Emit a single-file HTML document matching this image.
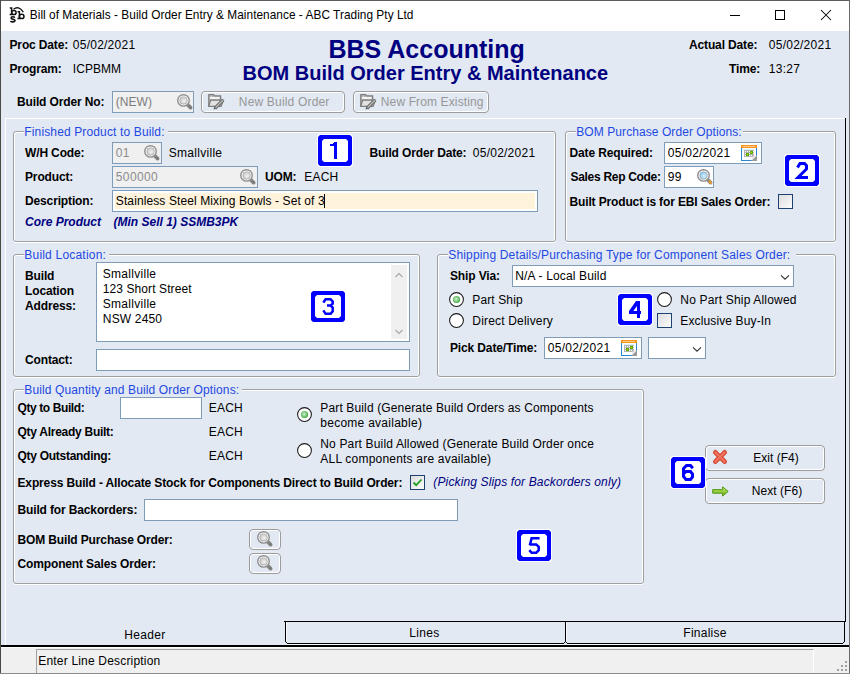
<!DOCTYPE html>
<html><head><meta charset="utf-8"><style>
html,body{margin:0;padding:0;}
body{width:850px;height:674px;position:relative;overflow:hidden;background:#e2e9f3;font-family:"Liberation Sans",sans-serif;}
.a{position:absolute;}
.t{position:absolute;white-space:pre;font-family:"Liberation Sans",sans-serif;}
.grp{border:1px solid #a0a0a0;border-radius:3px;box-shadow:inset 1px 1px 0 #fff, inset -1px 0 0 #fff, 0 1px 0 #fff;}
</style></head><body>

<div class="a" style="left:0px;top:0px;width:850px;height:674px;background:#e2e9f3;"></div>
<div class="a" style="left:0px;top:0px;width:850px;height:31px;background:#fff;"></div>
<div class="a" style="left:0px;top:0px;width:850px;height:1px;background:#5c5c5c;"></div>
<div class="a" style="left:0px;top:0px;width:1px;height:674px;background:#4a4a44;"></div>
<div class="a" style="left:849px;top:0px;width:1px;height:674px;background:#6a6a6a;"></div>
<svg class="a" style="left:0px;top:0px" width="30" height="30" viewBox="0 0 30 30">
<g fill="none" stroke="#111" stroke-width="1.5">
<path d="M9.8 8 H11.6 V14.6 H9.6"/><ellipse cx="13.9" cy="12.5" rx="2.2" ry="2.1"/>
<path d="M17.6 11.8 H19.4 V18.6 H17.4"/><ellipse cx="21.7" cy="16.4" rx="2.3" ry="2.2"/>
<path d="M14.9 17.6 Q13.6 16.4 11.9 16.9 Q10.6 17.6 11.6 18.7 L13.8 19.4 Q15.4 20.1 14.8 21.2 Q13.6 22.3 11.4 21.7 L10.4 21.1" stroke-width="1.6"/>
<path d="M13.6 9.2 Q18.4 5.2 23.4 12.2" stroke-width="1.3"/>
</g></svg>
<div class="t" style="left:29.80px;top:8.49px;font-size:11.85px;line-height:14px;font-weight:normal;color:#000;font-style:normal;letter-spacing:0.035px;">Bill of Materials - Build Order Entry &amp; Maintenance - ABC Trading Pty Ltd</div>
<div class="a" style="left:730px;top:15px;width:10px;height:1px;background:#000;"></div>
<div class="a" style="left:775px;top:10px;width:10px;height:10px;border:1px solid #000;box-sizing:border-box;"></div>
<svg class="a" style="left:820px;top:9px" width="12" height="12" viewBox="0 0 12 12"><path d="M1 1 L11 11 M11 1 L1 11" stroke="#000" stroke-width="1.05"/></svg>
<div class="t" style="left:9.50px;top:38.34px;font-size:12px;line-height:14px;font-weight:bold;color:#000;font-style:normal;letter-spacing:-0.14px;">Proc Date:</div>
<div class="t" style="left:72.80px;top:38.34px;font-size:12px;line-height:14px;font-weight:normal;color:#000;font-style:normal;letter-spacing:0.244px;">05/02/2021</div>
<div class="t" style="left:9.50px;top:62.34px;font-size:12px;line-height:14px;font-weight:bold;color:#000;font-style:normal;letter-spacing:-0.14px;">Program:</div>
<div class="t" style="left:72.80px;top:62.34px;font-size:12px;line-height:14px;font-weight:normal;color:#000;font-style:normal;letter-spacing:0.05px;">ICPBMM</div>
<div class="t" style="left:328.50px;top:34.14px;font-size:25px;line-height:30px;font-weight:bold;color:#000080;font-style:normal;">BBS Accounting</div>
<div class="t" style="left:242.50px;top:60.57px;font-size:20px;line-height:24px;font-weight:bold;color:#000080;font-style:normal;">BOM Build Order Entry &amp; Maintenance</div>
<div class="t" style="left:689.00px;top:38.34px;font-size:12px;line-height:14px;font-weight:bold;color:#000;font-style:normal;letter-spacing:-0.14px;">Actual Date:</div>
<div class="t" style="left:768.80px;top:38.34px;font-size:12px;line-height:14px;font-weight:normal;color:#000;font-style:normal;letter-spacing:0.244px;">05/02/2021</div>
<div class="t" style="left:729.00px;top:62.34px;font-size:12px;line-height:14px;font-weight:bold;color:#000;font-style:normal;letter-spacing:-0.14px;">Time:</div>
<div class="t" style="left:768.80px;top:62.34px;font-size:12px;line-height:14px;font-weight:normal;color:#000;font-style:normal;letter-spacing:0.244px;">13:27</div>
<div class="t" style="left:17.00px;top:95.34px;font-size:12px;line-height:14px;font-weight:bold;color:#000;font-style:normal;letter-spacing:-0.14px;">Build Order No:</div>
<div class="a" style="left:112px;top:91px;width:82px;height:22px;background:#f0f0f0;border:1px solid #7f9db9;box-sizing:border-box;"></div>
<div class="t" style="left:115.80px;top:95.14px;font-size:12px;line-height:14px;font-weight:normal;color:#7c7c7c;font-style:normal;letter-spacing:0.052px;">(NEW)</div>
<svg class="a" style="left:177px;top:94px" width="17" height="17" viewBox="0 0 17 17">
<defs><radialGradient id="lg177_94" cx="0.6" cy="0.6" r="0.8"><stop offset="0" stop-color="#f2f2f2"/><stop offset="1" stop-color="#bdbdbd"/></radialGradient></defs>
<path d="M10.8 10.8 L13.6 13.6" stroke="#8c8c8c" stroke-width="3.8" stroke-linecap="round"/>
<path d="M12.6 12.6 L13.8 13.8" stroke="#7c7c7c" stroke-width="2.4" stroke-linecap="round"/>
<circle cx="6.5" cy="6.4" r="6.4" fill="#8e8e8e"/>
<circle cx="6.5" cy="6.4" r="5" fill="#fcfcfc"/>
<circle cx="6.5" cy="6.4" r="4" fill="#a4a4a4"/>
<circle cx="6.5" cy="6.4" r="3.3" fill="url(#lg177_94)"/>
</svg>
<div class="a" style="left:201px;top:91px;width:144px;height:22px;border:1px solid #9c9c9c;border-radius:4px;box-sizing:border-box;box-shadow:inset 1px 1px 0 #fff, inset -1px -1px 0 #fff;background:#e2e9f3;"></div>
<div class="a" style="left:353px;top:91px;width:136px;height:22px;border:1px solid #9c9c9c;border-radius:4px;box-sizing:border-box;box-shadow:inset 1px 1px 0 #fff, inset -1px -1px 0 #fff;background:#e2e9f3;"></div>
<svg class="a" style="left:208px;top:93px" width="17" height="17" viewBox="0 0 17 17">
<path d="M0.8 1.6 H5.6 L6.6 2.8 H12.6 V13.4 H0.8 Z" fill="#bdbdbd" stroke="#7c7c7c" stroke-width="1.2"/>
<rect x="2" y="4" width="9.5" height="2" fill="#f4f4f4"/>
<path d="M0.8 13.4 L2.6 7.2 H15.4 L13 13.4 Z" fill="#e2e2e2" stroke="#7c7c7c" stroke-width="1.2"/>
<path d="M7 15.2 L15.2 7" stroke="#6e6e6e" stroke-width="3.4"/>
<path d="M7.6 14.6 L15 7.2" stroke="#c4c4c4" stroke-width="1.2"/>
<path d="M5.6 16.6 L6.2 14 L8 15.8 Z" fill="#555"/>
</svg>
<svg class="a" style="left:360px;top:93px" width="17" height="17" viewBox="0 0 17 17">
<path d="M0.8 1.6 H5.6 L6.6 2.8 H12.6 V13.4 H0.8 Z" fill="#bdbdbd" stroke="#7c7c7c" stroke-width="1.2"/>
<rect x="2" y="4" width="9.5" height="2" fill="#f4f4f4"/>
<path d="M0.8 13.4 L2.6 7.2 H15.4 L13 13.4 Z" fill="#e2e2e2" stroke="#7c7c7c" stroke-width="1.2"/>
<path d="M7 15.2 L15.2 7" stroke="#6e6e6e" stroke-width="3.4"/>
<path d="M7.6 14.6 L15 7.2" stroke="#c4c4c4" stroke-width="1.2"/>
<path d="M5.6 16.6 L6.2 14 L8 15.8 Z" fill="#555"/>
</svg>
<div class="t" style="left:238.80px;top:95.34px;font-size:12px;line-height:14px;font-weight:normal;color:#979797;font-style:normal;letter-spacing:0.181px;">New Build Order</div>
<div class="t" style="left:380.80px;top:95.34px;font-size:12px;line-height:14px;font-weight:normal;color:#979797;font-style:normal;letter-spacing:0.127px;">New From Existing</div>
<div class="a" style="left:5px;top:118px;width:841px;height:1px;background:#fff;"></div>
<div class="a" style="left:5px;top:118px;width:1px;height:527px;background:#fff;"></div>
<div class="a" style="left:845px;top:118px;width:1px;height:504px;background:#000;"></div>
<div class="a grp" style="left:13px;top:131px;width:541px;height:109px;"></div>
<div class="a" style="left:24px;top:129px;width:144px;height:5px;background:#e2e9f3;"></div>
<div class="t" style="left:24.30px;top:125.34px;font-size:12px;line-height:14px;font-weight:normal;color:#1e48e2;font-style:normal;letter-spacing:0.137px;">Finished Product to Build:</div>
<div class="t" style="left:25.00px;top:145.84px;font-size:12px;line-height:14px;font-weight:bold;color:#000;font-style:normal;letter-spacing:-0.14px;">W/H Code:</div>
<div class="a" style="left:112px;top:142px;width:50px;height:22px;background:#f0f0f0;border:1px solid #7f9db9;box-sizing:border-box;"></div>
<div class="t" style="left:115.80px;top:145.84px;font-size:12px;line-height:14px;font-weight:normal;color:#8c8c8c;font-style:normal;letter-spacing:0.376px;">01</div>
<svg class="a" style="left:144px;top:145px" width="17" height="17" viewBox="0 0 17 17">
<defs><radialGradient id="lg144_145" cx="0.6" cy="0.6" r="0.8"><stop offset="0" stop-color="#f2f2f2"/><stop offset="1" stop-color="#bdbdbd"/></radialGradient></defs>
<path d="M10.8 10.8 L13.6 13.6" stroke="#8c8c8c" stroke-width="3.8" stroke-linecap="round"/>
<path d="M12.6 12.6 L13.8 13.8" stroke="#7c7c7c" stroke-width="2.4" stroke-linecap="round"/>
<circle cx="6.5" cy="6.4" r="6.4" fill="#8e8e8e"/>
<circle cx="6.5" cy="6.4" r="5" fill="#fcfcfc"/>
<circle cx="6.5" cy="6.4" r="4" fill="#a4a4a4"/>
<circle cx="6.5" cy="6.4" r="3.3" fill="url(#lg144_145)"/>
</svg>
<div class="t" style="left:168.80px;top:145.84px;font-size:12px;line-height:14px;font-weight:normal;color:#000;font-style:normal;letter-spacing:0.282px;">Smallville</div>
<div class="t" style="left:25.00px;top:169.84px;font-size:12px;line-height:14px;font-weight:bold;color:#000;font-style:normal;letter-spacing:-0.14px;">Product:</div>
<div class="a" style="left:112px;top:166px;width:146px;height:22px;background:#f0f0f0;border:1px solid #7f9db9;box-sizing:border-box;"></div>
<div class="t" style="left:115.80px;top:169.84px;font-size:12px;line-height:14px;font-weight:normal;color:#8c8c8c;font-style:normal;letter-spacing:0.376px;">500000</div>
<svg class="a" style="left:240px;top:169px" width="17" height="17" viewBox="0 0 17 17">
<defs><radialGradient id="lg240_169" cx="0.6" cy="0.6" r="0.8"><stop offset="0" stop-color="#f2f2f2"/><stop offset="1" stop-color="#bdbdbd"/></radialGradient></defs>
<path d="M10.8 10.8 L13.6 13.6" stroke="#8c8c8c" stroke-width="3.8" stroke-linecap="round"/>
<path d="M12.6 12.6 L13.8 13.8" stroke="#7c7c7c" stroke-width="2.4" stroke-linecap="round"/>
<circle cx="6.5" cy="6.4" r="6.4" fill="#8e8e8e"/>
<circle cx="6.5" cy="6.4" r="5" fill="#fcfcfc"/>
<circle cx="6.5" cy="6.4" r="4" fill="#a4a4a4"/>
<circle cx="6.5" cy="6.4" r="3.3" fill="url(#lg240_169)"/>
</svg>
<div class="t" style="left:265.00px;top:169.84px;font-size:12px;line-height:14px;font-weight:bold;color:#000;font-style:normal;letter-spacing:-0.14px;">UOM:</div>
<div class="t" style="left:304.30px;top:169.84px;font-size:12px;line-height:14px;font-weight:normal;color:#000;font-style:normal;letter-spacing:0.215px;">EACH</div>
<div class="t" style="left:25.00px;top:193.84px;font-size:12px;line-height:14px;font-weight:bold;color:#000;font-style:normal;letter-spacing:-0.14px;">Description:</div>
<div class="a" style="left:112px;top:190px;width:426px;height:22px;background:#fff;border:1px solid #7f9db9;box-sizing:border-box;"></div>
<div class="a" style="left:115px;top:193px;width:420px;height:16px;background:#fff3dc;"></div>
<div class="t" style="left:115.80px;top:193.84px;font-size:12px;line-height:14px;font-weight:normal;color:#000;font-style:normal;letter-spacing:0.108px;">Stainless Steel Mixing Bowls - Set of 3</div>
<div class="a" style="left:324px;top:194px;width:1px;height:14px;background:#000;"></div>
<div class="t" style="left:25.00px;top:215.14px;font-size:12px;line-height:14px;font-weight:bold;color:#000080;font-style:italic;">Core Product</div>
<div class="t" style="left:113.50px;top:215.14px;font-size:12px;line-height:14px;font-weight:bold;color:#000080;font-style:italic;">(Min Sell 1) SSMB3PK</div>
<div class="t" style="left:369.50px;top:145.84px;font-size:12px;line-height:14px;font-weight:bold;color:#000;font-style:normal;letter-spacing:-0.14px;">Build Order Date:</div>
<div class="t" style="left:472.80px;top:145.84px;font-size:12px;line-height:14px;font-weight:normal;color:#000;font-style:normal;letter-spacing:0.244px;">05/02/2021</div>
<div class="a grp" style="left:565px;top:131px;width:269px;height:109px;"></div>
<div class="a" style="left:576px;top:129px;width:167px;height:5px;background:#e2e9f3;"></div>
<div class="t" style="left:576.30px;top:125.34px;font-size:12px;line-height:14px;font-weight:normal;color:#1e48e2;font-style:normal;letter-spacing:0.072px;">BOM Purchase Order Options:</div>
<div class="t" style="left:569.50px;top:146.34px;font-size:12px;line-height:14px;font-weight:bold;color:#000;font-style:normal;letter-spacing:-0.14px;">Date Required:</div>
<div class="a" style="left:664px;top:142px;width:98px;height:22px;background:#fff;border:1px solid #7f9db9;box-sizing:border-box;"></div>
<div class="t" style="left:667.80px;top:146.34px;font-size:12px;line-height:14px;font-weight:normal;color:#000;font-style:normal;letter-spacing:0.244px;">05/02/2021</div>
<svg class="a" style="left:741px;top:145px" width="16" height="16" viewBox="0 0 16 16" shape-rendering="crispEdges">
<rect x="0" y="0" width="16" height="16" fill="#2a86cf"/>
<rect x="1" y="3" width="14" height="12" fill="#fff"/>
<rect x="0" y="0" width="16" height="3" fill="#f7941d"/>
<rect x="2" y="1" width="12" height="1" fill="#fbc98a"/>
<rect x="3" y="4" width="10" height="1" fill="#d6f4fb"/>
<g fill="#b4b4b4"><rect x="3" y="5" width="10" height="7"/></g>
<g fill="#fff"><rect x="4" y="6" width="1" height="1"/><rect x="6" y="6" width="1" height="1"/><rect x="8" y="6" width="1" height="1"/><rect x="10" y="6" width="1" height="1"/><rect x="12" y="6" width="1" height="1"/>
<rect x="4" y="8" width="1" height="1"/><rect x="6" y="8" width="1" height="1"/><rect x="8" y="8" width="1" height="1"/><rect x="10" y="8" width="1" height="1"/><rect x="12" y="8" width="1" height="1"/>
<rect x="4" y="10" width="1" height="1"/><rect x="6" y="10" width="1" height="1"/><rect x="8" y="10" width="1" height="1"/><rect x="10" y="10" width="1" height="1"/></g>
<rect x="5" y="8" width="3" height="3" fill="#5aa800"/><rect x="9" y="6" width="3" height="3" fill="#5aa800"/>
<rect x="6" y="9" width="1" height="1" fill="#b8e000"/><rect x="10" y="7" width="1" height="1" fill="#b8e000"/>
<path d="M10 16 L16 10 L16 16 Z" fill="#9a9a9a" shape-rendering="auto"/>
<path d="M10.5 15.5 L15.5 10.5 L11.5 11.5 Z" fill="#e8e8e8" shape-rendering="auto"/>
</svg>
<div class="t" style="left:570.50px;top:170.34px;font-size:12px;line-height:14px;font-weight:bold;color:#000;font-style:normal;letter-spacing:-0.3px;">Sales Rep Code:</div>
<div class="a" style="left:664px;top:166px;width:50px;height:22px;background:#fff;border:1px solid #7f9db9;box-sizing:border-box;"></div>
<div class="t" style="left:667.80px;top:170.34px;font-size:12px;line-height:14px;font-weight:normal;color:#000;font-style:normal;letter-spacing:0.376px;">99</div>
<svg class="a" style="left:697px;top:169px" width="17" height="17" viewBox="0 0 17 17">
<defs><radialGradient id="lg697_169" cx="0.6" cy="0.6" r="0.8"><stop offset="0" stop-color="#e2f3fd"/><stop offset="1" stop-color="#6bb6ea"/></radialGradient></defs>
<path d="M10.8 10.8 L13.6 13.6" stroke="#8c8c8c" stroke-width="3.8" stroke-linecap="round"/>
<path d="M12.6 12.6 L13.8 13.8" stroke="#e89a2c" stroke-width="2.4" stroke-linecap="round"/>
<circle cx="6.5" cy="6.4" r="6.4" fill="#8e8e8e"/>
<circle cx="6.5" cy="6.4" r="5" fill="#fcfcfc"/>
<circle cx="6.5" cy="6.4" r="4" fill="#a4a4a4"/>
<circle cx="6.5" cy="6.4" r="3.3" fill="url(#lg697_169)"/>
</svg>
<div class="t" style="left:569.50px;top:195.34px;font-size:12px;line-height:14px;font-weight:bold;color:#000;font-style:normal;letter-spacing:-0.14px;">Built Product is for EBI Sales Order:</div>
<svg class="a" style="left:778px;top:194px" width="15" height="15" viewBox="0 0 15 15">
<defs><linearGradient id="cg778_194" x1="0" y1="0" x2="1" y2="1"><stop offset="0" stop-color="#dcdcdc"/><stop offset="1" stop-color="#fdfdfd"/></linearGradient></defs>
<rect x="0.5" y="0.5" width="14" height="14" fill="url(#cg778_194)" stroke="#1d4272"/>

</svg>
<div class="a grp" style="left:13px;top:254px;width:405px;height:121px;"></div>
<div class="a" style="left:24px;top:252px;width:85px;height:5px;background:#e2e9f3;"></div>
<div class="t" style="left:24.30px;top:248.34px;font-size:12px;line-height:14px;font-weight:normal;color:#1e48e2;font-style:normal;letter-spacing:0.202px;">Build Location:</div>
<div class="t" style="left:25.00px;top:269.34px;font-size:12px;line-height:14px;font-weight:bold;color:#000;font-style:normal;letter-spacing:-0.14px;">Build</div>
<div class="t" style="left:25.00px;top:284.34px;font-size:12px;line-height:14px;font-weight:bold;color:#000;font-style:normal;letter-spacing:-0.14px;">Location</div>
<div class="t" style="left:25.00px;top:299.34px;font-size:12px;line-height:14px;font-weight:bold;color:#000;font-style:normal;letter-spacing:-0.14px;">Address:</div>
<div class="a" style="left:96px;top:262px;width:314px;height:80px;background:#fff;border:1px solid #7f9db9;box-sizing:border-box;"></div>
<div class="t" style="left:102.80px;top:266.84px;font-size:12px;line-height:14px;font-weight:normal;color:#000;font-style:normal;letter-spacing:0.282px;">Smallville</div>
<div class="t" style="left:102.80px;top:281.84px;font-size:12px;line-height:14px;font-weight:normal;color:#000;font-style:normal;letter-spacing:0.088px;">123 Short Street</div>
<div class="t" style="left:102.80px;top:296.84px;font-size:12px;line-height:14px;font-weight:normal;color:#000;font-style:normal;letter-spacing:0.282px;">Smallville</div>
<div class="t" style="left:102.80px;top:311.84px;font-size:12px;line-height:14px;font-weight:normal;color:#000;font-style:normal;letter-spacing:0.172px;">NSW 2450</div>
<div class="a" style="left:391px;top:265px;width:16px;height:74px;background:#f0f0f0;"></div>
<svg class="a" style="left:391px;top:268px" width="16" height="70" viewBox="0 0 16 70"><path d="M4.5 9 L8 5.5 L11.5 9" fill="none" stroke="#a8a8a8" stroke-width="1.1"/><path d="M4.5 62 L8 65.5 L11.5 62" fill="none" stroke="#a8a8a8" stroke-width="1.1"/></svg>
<div class="t" style="left:25.00px;top:353.34px;font-size:12px;line-height:14px;font-weight:bold;color:#000;font-style:normal;letter-spacing:-0.14px;">Contact:</div>
<div class="a" style="left:96px;top:349px;width:314px;height:22px;background:#fff;border:1px solid #7f9db9;box-sizing:border-box;"></div>
<div class="a grp" style="left:437px;top:254px;width:397px;height:121px;"></div>
<div class="a" style="left:448px;top:252px;width:348px;height:5px;background:#e2e9f3;"></div>
<div class="t" style="left:448.30px;top:247.84px;font-size:12px;line-height:14px;font-weight:normal;color:#1e48e2;font-style:normal;letter-spacing:0.16px;">Shipping Details/Purchasing Type for Component Sales Order:</div>
<div class="t" style="left:450.00px;top:269.34px;font-size:12px;line-height:14px;font-weight:bold;color:#000;font-style:normal;letter-spacing:-0.14px;">Ship Via:</div>
<div class="a" style="left:512px;top:265px;width:282px;height:22px;background:#fff;border:1px solid #7f9db9;box-sizing:border-box;"></div>
<div class="t" style="left:515.30px;top:268.84px;font-size:12px;line-height:14px;font-weight:normal;color:#000;font-style:normal;letter-spacing:0.146px;">N/A - Local Build</div>
<svg class="a" style="left:778px;top:271px" width="14" height="12" viewBox="0 0 14 12"><path d="M3 4.3 L7 8.2 L11 4.3" fill="none" stroke="#333" stroke-width="1.1"/></svg>
<svg class="a" style="left:449px;top:292px" width="15" height="15" viewBox="0 0 15 15">
<defs><radialGradient id="rg449_292" cx="0.45" cy="0.45" r="0.6"><stop offset="0" stop-color="#d8f0d8"/><stop offset="0.55" stop-color="#7cc87c"/><stop offset="1" stop-color="#2f9e2f"/></radialGradient></defs>
<circle cx="7.5" cy="7.5" r="6.9" fill="#fff" stroke="#1a1a1a" stroke-width="1.05"/>
<circle cx="7.5" cy="7.5" r="3.6" fill="url(#rg449_292)"/>
</svg>
<div class="t" style="left:472.30px;top:292.84px;font-size:12px;line-height:14px;font-weight:normal;color:#000;font-style:normal;letter-spacing:0.121px;">Part Ship</div>
<svg class="a" style="left:449px;top:313px" width="15" height="15" viewBox="0 0 15 15">
<defs><radialGradient id="rg449_313" cx="0.45" cy="0.45" r="0.6"><stop offset="0" stop-color="#d8f0d8"/><stop offset="0.55" stop-color="#7cc87c"/><stop offset="1" stop-color="#2f9e2f"/></radialGradient></defs>
<circle cx="7.5" cy="7.5" r="6.9" fill="#fff" stroke="#1a1a1a" stroke-width="1.05"/>

</svg>
<div class="t" style="left:472.30px;top:313.84px;font-size:12px;line-height:14px;font-weight:normal;color:#000;font-style:normal;letter-spacing:0.183px;">Direct Delivery</div>
<svg class="a" style="left:657px;top:292px" width="15" height="15" viewBox="0 0 15 15">
<defs><radialGradient id="rg657_292" cx="0.45" cy="0.45" r="0.6"><stop offset="0" stop-color="#d8f0d8"/><stop offset="0.55" stop-color="#7cc87c"/><stop offset="1" stop-color="#2f9e2f"/></radialGradient></defs>
<circle cx="7.5" cy="7.5" r="6.9" fill="#fff" stroke="#1a1a1a" stroke-width="1.05"/>

</svg>
<div class="t" style="left:680.30px;top:292.84px;font-size:12px;line-height:14px;font-weight:normal;color:#000;font-style:normal;letter-spacing:0.18px;">No Part Ship Allowed</div>
<svg class="a" style="left:657px;top:313px" width="15" height="15" viewBox="0 0 15 15">
<defs><linearGradient id="cg657_313" x1="0" y1="0" x2="1" y2="1"><stop offset="0" stop-color="#dcdcdc"/><stop offset="1" stop-color="#fdfdfd"/></linearGradient></defs>
<rect x="0.5" y="0.5" width="14" height="14" fill="url(#cg657_313)" stroke="#1d4272"/>

</svg>
<div class="t" style="left:680.30px;top:313.84px;font-size:12px;line-height:14px;font-weight:normal;color:#000;font-style:normal;letter-spacing:0.131px;">Exclusive Buy-In</div>
<div class="t" style="left:450.00px;top:340.84px;font-size:12px;line-height:14px;font-weight:bold;color:#000;font-style:normal;letter-spacing:-0.14px;">Pick Date/Time:</div>
<div class="a" style="left:544px;top:337px;width:98px;height:22px;background:#fff;border:1px solid #7f9db9;box-sizing:border-box;"></div>
<div class="t" style="left:547.80px;top:341.34px;font-size:12px;line-height:14px;font-weight:normal;color:#000;font-style:normal;letter-spacing:0.244px;">05/02/2021</div>
<svg class="a" style="left:621px;top:340px" width="16" height="16" viewBox="0 0 16 16" shape-rendering="crispEdges">
<rect x="0" y="0" width="16" height="16" fill="#2a86cf"/>
<rect x="1" y="3" width="14" height="12" fill="#fff"/>
<rect x="0" y="0" width="16" height="3" fill="#f7941d"/>
<rect x="2" y="1" width="12" height="1" fill="#fbc98a"/>
<rect x="3" y="4" width="10" height="1" fill="#d6f4fb"/>
<g fill="#b4b4b4"><rect x="3" y="5" width="10" height="7"/></g>
<g fill="#fff"><rect x="4" y="6" width="1" height="1"/><rect x="6" y="6" width="1" height="1"/><rect x="8" y="6" width="1" height="1"/><rect x="10" y="6" width="1" height="1"/><rect x="12" y="6" width="1" height="1"/>
<rect x="4" y="8" width="1" height="1"/><rect x="6" y="8" width="1" height="1"/><rect x="8" y="8" width="1" height="1"/><rect x="10" y="8" width="1" height="1"/><rect x="12" y="8" width="1" height="1"/>
<rect x="4" y="10" width="1" height="1"/><rect x="6" y="10" width="1" height="1"/><rect x="8" y="10" width="1" height="1"/><rect x="10" y="10" width="1" height="1"/></g>
<rect x="5" y="8" width="3" height="3" fill="#5aa800"/><rect x="9" y="6" width="3" height="3" fill="#5aa800"/>
<rect x="6" y="9" width="1" height="1" fill="#b8e000"/><rect x="10" y="7" width="1" height="1" fill="#b8e000"/>
<path d="M10 16 L16 10 L16 16 Z" fill="#9a9a9a" shape-rendering="auto"/>
<path d="M10.5 15.5 L15.5 10.5 L11.5 11.5 Z" fill="#e8e8e8" shape-rendering="auto"/>
</svg>
<div class="a" style="left:648px;top:337px;width:58px;height:22px;background:#fff;border:1px solid #7f9db9;box-sizing:border-box;"></div>
<svg class="a" style="left:690px;top:343px" width="14" height="12" viewBox="0 0 14 12"><path d="M3 4.3 L7 8.2 L11 4.3" fill="none" stroke="#333" stroke-width="1.1"/></svg>
<div class="a grp" style="left:13px;top:389px;width:629px;height:193px;"></div>
<div class="a" style="left:24px;top:387px;width:218px;height:5px;background:#e2e9f3;"></div>
<div class="t" style="left:24.30px;top:383.34px;font-size:12px;line-height:14px;font-weight:normal;color:#1e48e2;font-style:normal;letter-spacing:0.124px;">Build Quantity and Build Order Options:</div>
<div class="t" style="left:17.50px;top:401.34px;font-size:12px;line-height:14px;font-weight:bold;color:#000;font-style:normal;letter-spacing:-0.4px;">Qty to Build:</div>
<div class="a" style="left:120px;top:397px;width:82px;height:22px;background:#fff;border:1px solid #7f9db9;box-sizing:border-box;"></div>
<div class="t" style="left:208.80px;top:400.84px;font-size:12px;line-height:14px;font-weight:normal;color:#000;font-style:normal;letter-spacing:0.215px;">EACH</div>
<div class="t" style="left:17.50px;top:425.34px;font-size:12px;line-height:14px;font-weight:bold;color:#000;font-style:normal;letter-spacing:-0.27px;">Qty Already Built:</div>
<div class="t" style="left:208.80px;top:425.34px;font-size:12px;line-height:14px;font-weight:normal;color:#000;font-style:normal;letter-spacing:0.215px;">EACH</div>
<div class="t" style="left:17.50px;top:449.34px;font-size:12px;line-height:14px;font-weight:bold;color:#000;font-style:normal;letter-spacing:-0.28px;">Qty Outstanding:</div>
<div class="t" style="left:208.80px;top:449.34px;font-size:12px;line-height:14px;font-weight:normal;color:#000;font-style:normal;letter-spacing:0.215px;">EACH</div>
<svg class="a" style="left:297px;top:407px" width="15" height="15" viewBox="0 0 15 15">
<defs><radialGradient id="rg297_407" cx="0.45" cy="0.45" r="0.6"><stop offset="0" stop-color="#d8f0d8"/><stop offset="0.55" stop-color="#7cc87c"/><stop offset="1" stop-color="#2f9e2f"/></radialGradient></defs>
<circle cx="7.5" cy="7.5" r="6.9" fill="#fff" stroke="#1a1a1a" stroke-width="1.05"/>
<circle cx="7.5" cy="7.5" r="3.6" fill="url(#rg297_407)"/>
</svg>
<div class="t" style="left:320.30px;top:400.84px;font-size:12px;line-height:14px;font-weight:normal;color:#000;font-style:normal;letter-spacing:0.139px;">Part Build (Generate Build Orders as Components</div>
<div class="t" style="left:320.30px;top:415.84px;font-size:12px;line-height:14px;font-weight:normal;color:#000;font-style:normal;letter-spacing:0.262px;">become available)</div>
<svg class="a" style="left:297px;top:443px" width="15" height="15" viewBox="0 0 15 15">
<defs><radialGradient id="rg297_443" cx="0.45" cy="0.45" r="0.6"><stop offset="0" stop-color="#d8f0d8"/><stop offset="0.55" stop-color="#7cc87c"/><stop offset="1" stop-color="#2f9e2f"/></radialGradient></defs>
<circle cx="7.5" cy="7.5" r="6.9" fill="#fff" stroke="#1a1a1a" stroke-width="1.05"/>

</svg>
<div class="t" style="left:320.30px;top:436.84px;font-size:12px;line-height:14px;font-weight:normal;color:#000;font-style:normal;letter-spacing:0.158px;">No Part Build Allowed (Generate Build Order once</div>
<div class="t" style="left:320.30px;top:451.84px;font-size:12px;line-height:14px;font-weight:normal;color:#000;font-style:normal;letter-spacing:0.207px;">ALL components are available)</div>
<div class="t" style="left:17.50px;top:476.34px;font-size:12px;line-height:14px;font-weight:bold;color:#000;font-style:normal;letter-spacing:-0.14px;">Express Build - Allocate Stock for Components Direct to Build Order:</div>
<svg class="a" style="left:410px;top:475px" width="15" height="15" viewBox="0 0 15 15">
<defs><linearGradient id="cg410_475" x1="0" y1="0" x2="1" y2="1"><stop offset="0" stop-color="#dcdcdc"/><stop offset="1" stop-color="#fdfdfd"/></linearGradient></defs>
<rect x="0.5" y="0.5" width="14" height="14" fill="url(#cg410_475)" stroke="#1d4272"/>
<path d="M3.5 7.5 L6.2 10.2 L11.5 4.5" fill="none" stroke="#21a121" stroke-width="1.8"/>
</svg>
<div class="t" style="left:433.30px;top:475.34px;font-size:12px;line-height:14px;font-weight:normal;color:#000080;font-style:italic;letter-spacing:0.143px;">(Picking Slips for Backorders only)</div>
<div class="t" style="left:17.50px;top:503.34px;font-size:12px;line-height:14px;font-weight:bold;color:#000;font-style:normal;letter-spacing:-0.14px;">Build for Backorders:</div>
<div class="a" style="left:144px;top:499px;width:314px;height:22px;background:#fff;border:1px solid #7f9db9;box-sizing:border-box;"></div>
<div class="t" style="left:17.50px;top:533.34px;font-size:12px;line-height:14px;font-weight:bold;color:#000;font-style:normal;letter-spacing:-0.14px;">BOM Build Purchase Order:</div>
<div class="a" style="left:249px;top:529px;width:32px;height:21px;border:1px solid #9c9c9c;border-radius:4px;box-sizing:border-box;box-shadow:inset 1px 1px 0 #fff, inset -1px -1px 0 #fff;background:#e2e9f3;"></div>
<svg class="a" style="left:257px;top:531px" width="17" height="17" viewBox="0 0 17 17">
<defs><radialGradient id="lg257_531" cx="0.6" cy="0.6" r="0.8"><stop offset="0" stop-color="#f2f2f2"/><stop offset="1" stop-color="#bdbdbd"/></radialGradient></defs>
<path d="M10.8 10.8 L13.6 13.6" stroke="#8c8c8c" stroke-width="3.8" stroke-linecap="round"/>
<path d="M12.6 12.6 L13.8 13.8" stroke="#7c7c7c" stroke-width="2.4" stroke-linecap="round"/>
<circle cx="6.5" cy="6.4" r="6.4" fill="#8e8e8e"/>
<circle cx="6.5" cy="6.4" r="5" fill="#fcfcfc"/>
<circle cx="6.5" cy="6.4" r="4" fill="#a4a4a4"/>
<circle cx="6.5" cy="6.4" r="3.3" fill="url(#lg257_531)"/>
</svg>
<div class="t" style="left:17.50px;top:557.34px;font-size:12px;line-height:14px;font-weight:bold;color:#000;font-style:normal;letter-spacing:-0.14px;">Component Sales Order:</div>
<div class="a" style="left:249px;top:553px;width:32px;height:21px;border:1px solid #9c9c9c;border-radius:4px;box-sizing:border-box;box-shadow:inset 1px 1px 0 #fff, inset -1px -1px 0 #fff;background:#e2e9f3;"></div>
<svg class="a" style="left:257px;top:555px" width="17" height="17" viewBox="0 0 17 17">
<defs><radialGradient id="lg257_555" cx="0.6" cy="0.6" r="0.8"><stop offset="0" stop-color="#f2f2f2"/><stop offset="1" stop-color="#bdbdbd"/></radialGradient></defs>
<path d="M10.8 10.8 L13.6 13.6" stroke="#8c8c8c" stroke-width="3.8" stroke-linecap="round"/>
<path d="M12.6 12.6 L13.8 13.8" stroke="#7c7c7c" stroke-width="2.4" stroke-linecap="round"/>
<circle cx="6.5" cy="6.4" r="6.4" fill="#8e8e8e"/>
<circle cx="6.5" cy="6.4" r="5" fill="#fcfcfc"/>
<circle cx="6.5" cy="6.4" r="4" fill="#a4a4a4"/>
<circle cx="6.5" cy="6.4" r="3.3" fill="url(#lg257_555)"/>
</svg>
<div class="a" style="left:705px;top:445px;width:120px;height:26px;border:1px solid #9c9c9c;border-radius:4px;box-sizing:border-box;box-shadow:inset 1px 1px 0 #fff, inset -1px -1px 0 #fff;background:#e2e9f3;"></div>
<svg class="a" style="left:712px;top:449px" width="16" height="16" viewBox="0 0 16 16">
<path d="M3.3 3.3 L12.7 12.7 M12.7 3.3 L3.3 12.7" stroke="#d2412c" stroke-width="4.6" stroke-linecap="round"/>
<path d="M3.3 3.3 L12.7 12.7 M12.7 3.3 L3.3 12.7" stroke="#f0705c" stroke-width="2.6" stroke-linecap="round"/>
</svg>
<div class="t" style="left:753.30px;top:450.84px;font-size:12px;line-height:14px;font-weight:normal;color:#000;font-style:normal;letter-spacing:0.013px;">Exit (F4)</div>
<div class="a" style="left:705px;top:478px;width:120px;height:26px;border:1px solid #9c9c9c;border-radius:4px;box-sizing:border-box;box-shadow:inset 1px 1px 0 #fff, inset -1px -1px 0 #fff;background:#e2e9f3;"></div>
<svg class="a" style="left:712px;top:486px" width="17" height="11" viewBox="0 0 17 11">
<defs><linearGradient id="arg" x1="0" y1="0" x2="0" y2="1"><stop offset="0" stop-color="#c8e86a"/><stop offset="1" stop-color="#6aae1c"/></linearGradient></defs>
<path d="M0.7 3.6 H10.6 V0.8 L16.2 5.4 L10.6 10 V7.2 H0.7 Z" fill="url(#arg)" stroke="#4f9a14" stroke-width="1" stroke-linejoin="round"/>
</svg>
<div class="t" style="left:751.80px;top:483.84px;font-size:12px;line-height:14px;font-weight:normal;color:#000;font-style:normal;letter-spacing:0.05px;">Next (F6)</div>
<svg class="a" style="left:317px;top:134px" width="36" height="33" viewBox="-1 -1 36 33">
<path d="M1 -1 H33 L35 1 V30 L33 32 H1 L-1 30 V1 Z" fill="#fff"/>
<path d="M2 0 H32 L34 2 V29 L32 31 H2 L0 29 V2 Z" fill="#0000ff"/>
<path d="M6 4 H28 L30 6 V25 L28 27 H6 L4 25 V6 Z" fill="#fff"/>
<g transform="translate(11,7)"><path d="M5 0 H8 V17 H5 Z M1 2 H5 V4 H1 Z M4 1 H5 V2 H4 Z" fill="#0000ff" stroke="none"/></g>
</svg>
<svg class="a" style="left:784px;top:154px" width="36" height="33" viewBox="-1 -1 36 33">
<path d="M1 -1 H33 L35 1 V30 L33 32 H1 L-1 30 V1 Z" fill="#fff"/>
<path d="M2 0 H32 L34 2 V29 L32 31 H2 L0 29 V2 Z" fill="#0000ff"/>
<path d="M6 4 H28 L30 6 V25 L28 27 H6 L4 25 V6 Z" fill="#fff"/>
<g transform="translate(11,7)"><path d="M1.5 5.5 L4 1.5 H8.5 L10.5 3.5 V7 L2 15.5 H12" fill="none" stroke="#0000ff" stroke-width="3"/></g>
</svg>
<svg class="a" style="left:310px;top:290px" width="36" height="33" viewBox="-1 -1 36 33">
<path d="M1 -1 H33 L35 1 V30 L33 32 H1 L-1 30 V1 Z" fill="#fff"/>
<path d="M2 0 H32 L34 2 V29 L32 31 H2 L0 29 V2 Z" fill="#0000ff"/>
<path d="M6 4 H28 L30 6 V25 L28 27 H6 L4 25 V6 Z" fill="#fff"/>
<g transform="translate(11,7)"><path d="M1.3 4.6 L3.6 1.3 H8.6 L10.7 3.4 V5.6 L8.6 7.6 H5 M8.6 7.6 L10.7 9.6 V13.2 L8.6 15.8 H3.6 L1.3 12.4" fill="none" stroke="#0000ff" stroke-width="2.5"/></g>
</svg>
<svg class="a" style="left:617px;top:293px" width="36" height="33" viewBox="-1 -1 36 33">
<path d="M1 -1 H33 L35 1 V30 L33 32 H1 L-1 30 V1 Z" fill="#fff"/>
<path d="M2 0 H32 L34 2 V29 L32 31 H2 L0 29 V2 Z" fill="#0000ff"/>
<path d="M6 4 H28 L30 6 V25 L28 27 H6 L4 25 V6 Z" fill="#fff"/>
<g transform="translate(11,7)"><path d="M7 0 H11 V10 H12 V13 H11 V17 H8 V13 H0 V10 Z M8 5 V10 H4.3 Z" fill="#0000ff" fill-rule="evenodd" stroke="none"/></g>
</svg>
<svg class="a" style="left:516px;top:529px" width="36" height="33" viewBox="-1 -1 36 33">
<path d="M1 -1 H33 L35 1 V30 L33 32 H1 L-1 30 V1 Z" fill="#fff"/>
<path d="M2 0 H32 L34 2 V29 L32 31 H2 L0 29 V2 Z" fill="#0000ff"/>
<path d="M6 4 H28 L30 6 V25 L28 27 H6 L4 25 V6 Z" fill="#fff"/>
<g transform="translate(11,7)"><path d="M11.6 1.2 H3.6 L1.8 8.4 M1.8 7.4 H8.2 L10.7 9.8 V13.2 L8.2 15.8 H3.6 L1.3 13.2" fill="none" stroke="#0000ff" stroke-width="2.5"/></g>
</svg>
<svg class="a" style="left:670px;top:456px" width="36" height="33" viewBox="-1 -1 36 33">
<path d="M1 -1 H33 L35 1 V30 L33 32 H1 L-1 30 V1 Z" fill="#fff"/>
<path d="M2 0 H32 L34 2 V29 L32 31 H2 L0 29 V2 Z" fill="#0000ff"/>
<path d="M6 4 H28 L30 6 V25 L28 27 H6 L4 25 V6 Z" fill="#fff"/>
<g transform="translate(11,7)"><path d="M10.8 4.2 L8.5 1.5 H4.5 L1.5 4.5 V12.5 L4 15.5 H8.5 L10.5 13 V10 L8.5 7.5 H4 L1.5 10" fill="none" stroke="#0000ff" stroke-width="3"/></g>
</svg>
<div class="a" style="left:284px;top:621px;width:562px;height:1px;background:#000;"></div>
<svg class="a" style="left:285px;top:621px" width="281" height="24" viewBox="0 0 281 24" shape-rendering="crispEdges">
<rect x="1" y="1" width="279" height="21" fill="#e2e9f3"/>
<rect x="0" y="0" width="1" height="21" fill="#000"/><rect x="1" y="21" width="1" height="1" fill="#000"/>
<rect x="2" y="22" width="277" height="1" fill="#000"/>
<rect x="280" y="0" width="1" height="21" fill="#000"/><rect x="279" y="21" width="1" height="1" fill="#000"/>
<rect x="1" y="1" width="1" height="20" fill="#f6f9fd"/>
<rect x="2" y="23" width="277" height="1" fill="#f4f7fb"/>
</svg>
<svg class="a" style="left:565px;top:621px" width="280" height="24" viewBox="0 0 280 24" shape-rendering="crispEdges">
<rect x="1" y="1" width="278" height="21" fill="#e2e9f3"/>
<rect x="0" y="0" width="1" height="21" fill="#000"/><rect x="1" y="21" width="1" height="1" fill="#000"/>
<rect x="2" y="22" width="276" height="1" fill="#000"/>
<rect x="279" y="0" width="1" height="21" fill="#000"/><rect x="278" y="21" width="1" height="1" fill="#000"/>
<rect x="1" y="1" width="1" height="20" fill="#f6f9fd"/>
<rect x="2" y="23" width="276" height="1" fill="#f4f7fb"/>
</svg>
<div class="a" style="left:1px;top:645px;width:848px;height:2px;background:#000;"></div>
<div class="a" style="left:1px;top:647px;width:848px;height:1px;background:#fdfdfd;"></div>
<div class="t" style="left:124.30px;top:628.34px;font-size:12px;line-height:14px;font-weight:normal;color:#000;font-style:normal;letter-spacing:0.324px;">Header</div>
<div class="t" style="left:409.30px;top:626.34px;font-size:12px;line-height:14px;font-weight:normal;color:#000;font-style:normal;letter-spacing:0.312px;">Lines</div>
<div class="t" style="left:683.30px;top:626.34px;font-size:12px;line-height:14px;font-weight:normal;color:#000;font-style:normal;letter-spacing:0.256px;">Finalise</div>
<div class="a" style="left:1px;top:648px;width:848px;height:25px;background:#f0f0f0;"></div>
<div class="a" style="left:0px;top:673px;width:850px;height:1px;background:#8a8a8a;"></div>
<div class="a" style="left:36px;top:649px;width:778px;height:24px;border-left:1px solid #a0a0a0;border-top:1px solid #a0a0a0;border-right:1px solid #fff;box-sizing:border-box;"></div>
<div class="t" style="left:38.30px;top:653.84px;font-size:12px;line-height:14px;font-weight:normal;color:#000;font-style:normal;letter-spacing:0.184px;">Enter Line Description</div>
<div class="a" style="left:845px;top:661px;width:2px;height:2px;background:#a0a0a0;"></div>
<div class="a" style="left:841px;top:665px;width:2px;height:2px;background:#a0a0a0;"></div>
<div class="a" style="left:845px;top:665px;width:2px;height:2px;background:#a0a0a0;"></div>
<div class="a" style="left:837px;top:669px;width:2px;height:2px;background:#a0a0a0;"></div>
<div class="a" style="left:841px;top:669px;width:2px;height:2px;background:#a0a0a0;"></div>
<div class="a" style="left:845px;top:669px;width:2px;height:2px;background:#a0a0a0;"></div>
</body></html>
